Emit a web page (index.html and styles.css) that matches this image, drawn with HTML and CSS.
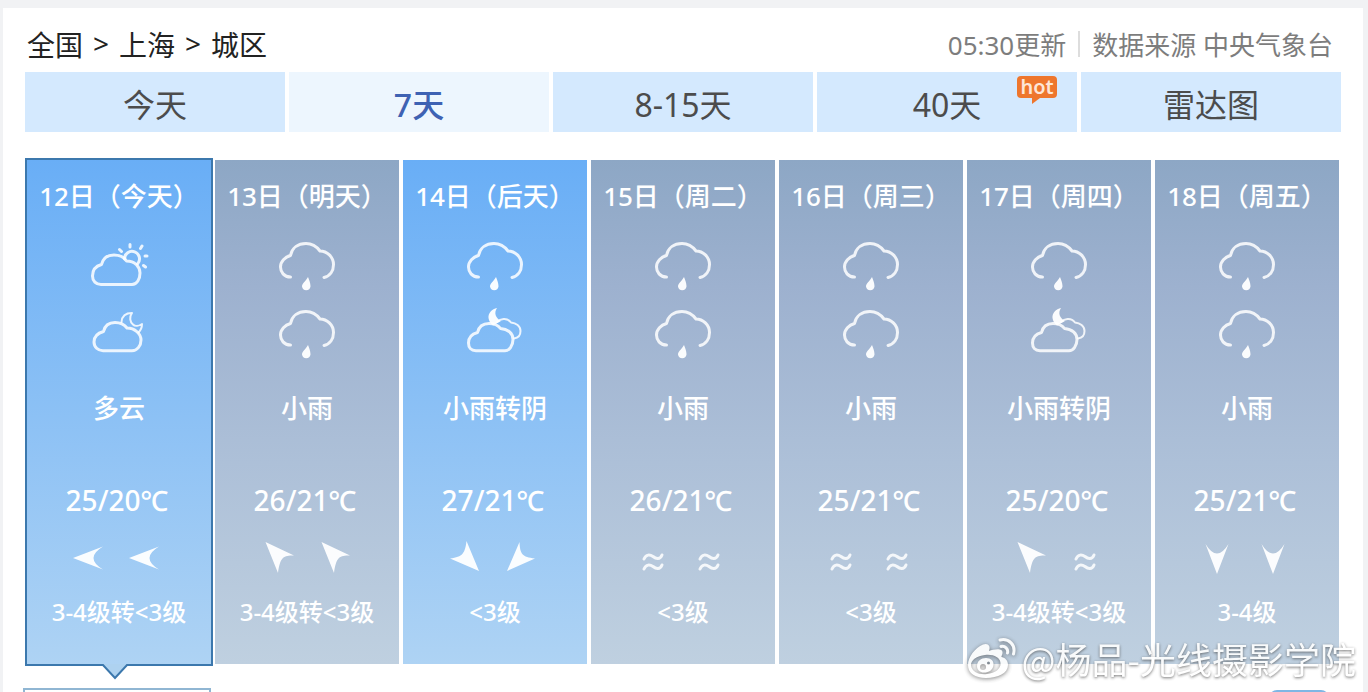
FILE: index.html
```
<!DOCTYPE html>
<html lang="zh-CN">
<head>
<meta charset="utf-8">
<meta name="viewport" content="width=device-width, initial-scale=1">
<title>上海城区 7天天气预报</title>
<link rel="stylesheet" href="styles.css">
</head>
<body>
<svg class="sprite" aria-hidden="true">
  <symbol id="rain" viewBox="0 0 60 60">
    <path class="line" d="M13.500 41C7 41 3.500 36 3.500 31C3.500 25.500 8 21 13.500 19.500C15 12 21 7.500 29 7.500C36 7.500 40 11 43 15C50 15 56.500 21 56.500 28.500C56.500 35 53 40 47 41.500"/>
    <path class="solid" d="M31 41C33 46 33.500 48 33.500 50.500A4.300 4.300 0 0 1 25 50.500C25 47.500 28 46 31 41Z"/>
  </symbol>
  <symbol id="cloud-sun" viewBox="0 0 60 60">
    <path class="line" d="M12 48.500C7 48.500 3.500 45 3.500 40C3.500 34 7 30 12.500 28.500C14 22 19 19 25 19C31 19 35 21 37.500 25C46 25 51 31 51 37C51 43 48 48.500 43 48.500Z"/>
    <path class="line" d="M35.500 23A7.500 7.500 0 1 1 48.500 28M41 8.500V11M53 10L51.500 12.500M56 20H58M54.500 29.500L56.500 31M30.500 13.500L32.500 15.500"/>
  </symbol>
  <symbol id="cloud-moon" viewBox="0 0 60 60">
    <path class="line" d="M14 46.700C9 46.700 5 43 5 38C5 32 9 29 14.500 27.500C16 21 21 18.500 26 18.500C31 18.500 35 20 38 24C46 24 52 30 52 36C52 42 48 46.700 43 46.700Z"/>
    <path class="line thin" d="M32.500 18C33 12 37 9 43 9C40 13 41 18 44 20.500C46 22.500 50 22 53 20C53 23.500 52 26 49.500 28.500"/>
  </symbol>
  <symbol id="overcast-night" viewBox="0 0 60 60">
    <path class="line" d="M11 46.700C6 46.700 3.500 43.500 3.500 39C3.500 33.500 7 30 12.500 28.500C14 22 19 19.500 24 19.500C29 19.500 33 21 35.500 24.500C43 25 48 29.500 48 35.500C48 42 44 46.700 40 46.700Z"/>
    <path class="line thin" d="M32 18C35 15 42 13 46 18.500C51 19 55.500 22 55.500 27C55.500 31 53 34 49 34.500"/>
    <path class="solid" d="M32 4C27 5 23 9 23.500 14C24 17 25.500 20 28 21.500L36 17C31 14.500 28.500 9 32 4Z"/>
  </symbol>
  <symbol id="wind-w" viewBox="0 0 40 40"><path class="solid" d="M4 20L34 8.500Q15 20 34 31.500Z"/></symbol>
  <symbol id="wind-nw" viewBox="0 0 40 40"><path class="solid" d="M8.500 4L37 17.500C26 17 23 20 21 35Z"/></symbol>
  <symbol id="wind-se" viewBox="0 0 40 40"><path class="solid" d="M34 33L21.500 3C20 15 18 19 5 20.500Z"/></symbol>
  <symbol id="wind-sw" viewBox="0 0 40 40"><path class="solid" d="M6 33L18.500 4C19 16 21 19 34 20.500Z"/></symbol>
  <symbol id="wind-s" viewBox="0 0 40 40"><path class="solid" d="M20 36L8.500 6Q20 25 31.500 6Z"/></symbol>
  <symbol id="calm" viewBox="0 0 40 40"><path class="line wave" d="M11 21C13 16 17 16.500 20 18.500C23 21 27 22 29 17M11 31C13 26 17 26.500 20 28.500C23 31 27 32 29 27"/></symbol>
</svg>

<main class="panel">
  <header class="top">
    <nav class="crumbs" aria-label="位置">
      <a href="#">全国</a><span>&gt;</span><a href="#">上海</a><span>&gt;</span><a href="#">城区</a>
    </nav>
    <p class="source"><span>05:30更新</span><i class="bar"></i><span>数据来源 中央气象台</span></p>
  </header>

  <nav class="tabs" aria-label="预报时段">
    <a href="#">今天</a>
    <a href="#" class="current">7天</a>
    <a href="#">8-15天</a>
    <a href="#">40天<span class="hot">hot</span></a>
    <a href="#">雷达图</a>
  </nav>

  <ul class="days">
    <li class="day clear selected">
      <h2>12日（今天）</h2>
      <div class="sky"><svg><use href="#cloud-sun"/></svg><svg><use href="#cloud-moon"/></svg></div>
      <p class="desc">多云</p>
      <p class="temp">25/20℃</p>
      <div class="wind"><svg><use href="#wind-w"/></svg><svg><use href="#wind-w"/></svg></div>
      <p class="level">3-4级转&lt;3级</p>
      <svg class="pointer" viewBox="0 0 28 16"><path d="M0 0H28L14 14Z" fill="#aed2f0"/><path d="M0 1H2L14 14L26 1H28" fill="none" stroke="#3c78ad" stroke-width="2"/></svg>
    </li>
    <li class="day">
      <h2>13日（明天）</h2>
      <div class="sky"><svg><use href="#rain"/></svg><svg><use href="#rain"/></svg></div>
      <p class="desc">小雨</p>
      <p class="temp">26/21℃</p>
      <div class="wind"><svg><use href="#wind-nw"/></svg><svg><use href="#wind-nw"/></svg></div>
      <p class="level">3-4级转&lt;3级</p>
    </li>
    <li class="day clear">
      <h2>14日（后天）</h2>
      <div class="sky"><svg><use href="#rain"/></svg><svg><use href="#overcast-night"/></svg></div>
      <p class="desc">小雨转阴</p>
      <p class="temp">27/21℃</p>
      <div class="wind"><svg><use href="#wind-se"/></svg><svg><use href="#wind-sw"/></svg></div>
      <p class="level">&lt;3级</p>
    </li>
    <li class="day">
      <h2>15日（周二）</h2>
      <div class="sky"><svg><use href="#rain"/></svg><svg><use href="#rain"/></svg></div>
      <p class="desc">小雨</p>
      <p class="temp">26/21℃</p>
      <div class="wind"><svg><use href="#calm"/></svg><svg><use href="#calm"/></svg></div>
      <p class="level">&lt;3级</p>
    </li>
    <li class="day">
      <h2>16日（周三）</h2>
      <div class="sky"><svg><use href="#rain"/></svg><svg><use href="#rain"/></svg></div>
      <p class="desc">小雨</p>
      <p class="temp">25/21℃</p>
      <div class="wind"><svg><use href="#calm"/></svg><svg><use href="#calm"/></svg></div>
      <p class="level">&lt;3级</p>
    </li>
    <li class="day">
      <h2>17日（周四）</h2>
      <div class="sky"><svg><use href="#rain"/></svg><svg><use href="#overcast-night"/></svg></div>
      <p class="desc">小雨转阴</p>
      <p class="temp">25/20℃</p>
      <div class="wind"><svg><use href="#wind-nw"/></svg><svg><use href="#calm"/></svg></div>
      <p class="level">3-4级转&lt;3级</p>
    </li>
    <li class="day">
      <h2>18日（周五）</h2>
      <div class="sky"><svg><use href="#rain"/></svg><svg><use href="#rain"/></svg></div>
      <p class="desc">小雨</p>
      <p class="temp">25/21℃</p>
      <div class="wind"><svg><use href="#wind-s"/></svg><svg><use href="#wind-s"/></svg></div>
      <p class="level">3-4级</p>
    </li>
  </ul>

  <section class="hourly">
    <div class="hourly-tab"></div>
    <div class="hourly-toggle"></div>
  </section>
</main>

<div class="watermark">
  <svg viewBox="0 0 50 42" aria-hidden="true">
    <path fill="#fff" fill-rule="evenodd" d="M1 28C1 20 8 11 16 7.500C21 5.500 24 9 22 14C27 12 36 10.500 35.500 16C35.500 18 34 19 34.500 20C39 21 41 24 41 28C41 36 31 41 19 41C8 41 1 36 1 28ZM4 28.500C5 35 12 38 20 37C28 36 34 32 33.500 26C33 20 26 17 18 18C10 19 3.500 23 4 28.500Z"/>
    <path fill="#fff" fill-rule="evenodd" d="M10 29C10 24 14 21 19 21C24 21 27 24 26.500 28C26 33 22 35.500 17 35.500C13 35.500 10 33 10 29ZM13 30A3 3 0 1 0 19 30A3 3 0 1 0 13 30ZM20 26A1.500 1.500 0 1 0 23 26A1.500 1.500 0 1 0 20 26Z"/>
    <path fill="none" stroke="#fff" stroke-width="3" stroke-linecap="round" d="M33 3C42 1 49 8 46.500 17M34 9.500C38 8.500 41.500 12 40.500 16"/>
  </svg>
  <span>@杨品-光线摄影学院</span>
</div>
</body>
</html>
```

FILE: styles.css
```
* { box-sizing: border-box; }

body {
  margin: 0;
  padding: 8px 5px 0 3px;
  height: 100vh;
  overflow: hidden;
  position: relative;
  background: #f1f2f4;
  font-family: "Noto Sans", "Noto Sans CJK SC", sans-serif;
}

h2, p, ul { margin: 0; padding: 0; font-weight: 400; }
ul { list-style: none; }
a { color: inherit; text-decoration: none; }
.sprite { position: absolute; width: 0; height: 0; }

.line { fill: none; stroke: #fff; stroke-width: 3; stroke-linecap: round; stroke-linejoin: round; opacity: 0.85; }
.thin { stroke-width: 2; }
.wave { stroke-width: 3; }
.solid { fill: #fff; opacity: 0.95; }

.panel {
  height: 100%;
  overflow: hidden;
  padding: 14px 22px 0;
  background: #fff;
}

.top {
  display: flex;
  justify-content: space-between;
  align-items: center;
  height: 44px;
  margin-bottom: 6px;
  padding: 0 8px 0 2px;
}
.crumbs { display: flex; gap: 10px; font-size: 28px; color: #222; }
.source { display: flex; align-items: center; gap: 12px; font-size: 26px; color: #7d7d7d; }
.bar { width: 2px; height: 26px; background: #ddd; }

.tabs { display: grid; grid-template-columns: repeat(5, 1fr); gap: 4px; }
.tabs a {
  position: relative;
  height: 60px;
  line-height: 66px;
  background: #d4e9fe;
  color: #4c4c4c;
  font-size: 32px;
  text-align: center;
}
.tabs .current { background: #edf6fe; color: #3e62b3; font-weight: 500; }
.hot {
  position: absolute;
  top: 4px;
  right: 20px;
  width: 40px;
  height: 22px;
  border-radius: 4px;
  background: #ee762d;
  color: #fde6d8;
  font: 600 20px/22px "Noto Sans", sans-serif;
}
.hot::after {
  content: "";
  position: absolute;
  left: 15px;
  top: 22px;
  border-top: 6px solid #ee762d;
  border-right: 8px solid transparent;
}

.days {
  display: grid;
  grid-template-columns: repeat(7, 1fr);
  gap: 4px;
  margin: 28px 2px 24px;
}
.day {
  position: relative;
  display: flex;
  flex-direction: column;
  align-items: center;
  padding: 16px 0 32px;
  background: linear-gradient(#8da7c5, #9db1cf 25%, #adc0d8 60%, #bfd0e0);
  color: #fff;
  white-space: nowrap;
}
.clear { background: linear-gradient(#69aef6, #aed3f4); }
.selected { box-shadow: 0 0 0 2px #3c78ad; }
.day h2, .day p { height: 40px; line-height: 40px; font-weight: 500; }
.day h2, .desc { font-size: 26px; }
.day h2 { margin-bottom: 20px; }
.sky { display: grid; gap: 8px; margin-bottom: 24px; }
.sky svg { width: 60px; height: 60px; }
.desc { margin-bottom: 52px; }
.temp { margin-bottom: 18px; padding-right: 4px; font-size: 28px; }
.wind { display: flex; gap: 16px; margin-bottom: 14px; padding-right: 4px; }
.wind svg { width: 40px; height: 40px; }
.level { font-size: 24px; }
.pointer {
  position: absolute;
  top: 100%;
  left: 50%;
  width: 28px;
  height: 16px;
  margin-left: -18px;
}

.hourly {
  display: flex;
  justify-content: space-between;
  margin-left: -2px;
  padding-right: 12px;
}
.hourly-tab { width: 188px; height: 48px; border: 2px solid #90b6d3; }
.hourly-toggle { width: 60px; height: 32px; margin-top: 2px; border-radius: 8px; background: #7fb6e4; }

.watermark {
  position: absolute;
  right: 12px;
  bottom: 10px;
  display: flex;
  align-items: center;
  gap: 4px;
  color: #fff;
  font: 400 36px/48px "Noto Sans CJK SC", sans-serif;
  text-shadow: 0 1px 3px rgba(60, 60, 60, 0.8);
  opacity: 0.9;
}
.watermark svg {
  width: 50px;
  height: 42px;
  filter: drop-shadow(0 1px 2px rgba(60, 60, 60, 0.7));
}
```
